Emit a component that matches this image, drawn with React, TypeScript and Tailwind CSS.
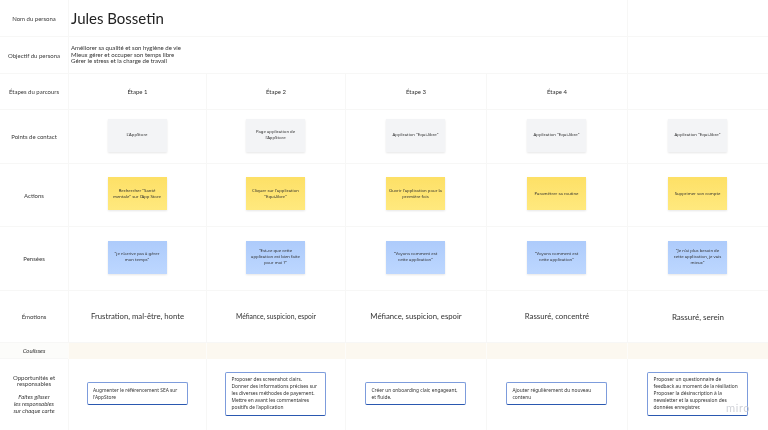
import React from 'react';

const line = 'border-b border-[#f7f7f6]';
const cell = 'border-l border-b border-[#f7f7f6]';

const contacts = ["L'AppStore", "Page application de\nl'AppStore", 'Application "Equi-libre"', 'Application "Equi-libre"', 'Application "Equi-libre"'];
const actions = ['Rechercher "Santé\nmentale" sur l\'App Store', 'Cliquer sur l\'application\n"Equi-libre"', "Ouvrir l'application pour la\npremière fois", 'Paramétrer sa routine', 'Supprimer son compte'];
const thoughts = ['"je n\'arrive pas à gérer\nmon temps"', '"Est-ce que cette\napplication est bien faite\npour moi ?"', '"Voyons comment est\ncette application"', '"Voyons comment est\ncette application"', '"Je n\'ai plus besoin de\ncette application, je vais\nmieux"'];
const emotions = [
  { text: 'Frustration, mal-être, honte', size: 'text-[7.75px]' },
  { text: 'Méfiance, suspicion, espoir', size: 'text-[6.8px]' },
  { text: 'Méfiance, suspicion, espoir', size: 'text-[7.75px]' },
  { text: 'Rassuré, concentré', size: 'text-[7.8px]' },
  { text: 'Rassuré, serein', size: 'text-[8px]' },
];
const opportunities = [
  "Augmenter le référencement SEA sur\nl'AppStore",
  'Proposer des screenshot clairs.\nDonner des informations précises sur\nles diverses méthodes de payement.\nMettre en avant les commentaires\npositifs de l\'application',
  'Créer un onboarding clair, engageant,\net fluide.',
  'Ajouter régulièrement du nouveau\ncontenu',
  'Proposer un questionnaire de\nfeedback au moment de la résiliation\nProposer la désinscription à la\nnewsletter et la suppression des\ndonnées enregistrer.',
];

const RowLabel = ({ children }: { children: React.ReactNode }) => (
  <div className={`${line} flex items-center justify-center text-center text-[6px] leading-[7px] text-[#3a3a3a] font-['Lato',sans-serif]`}>
    {children}
  </div>
);

const Sticky = ({ text, color }: { text: string; color: string }) => (
  <div className={`${cell} flex items-center justify-center pb-[3px] pr-[1px]`}>
    <div className={`${color} w-[59px] h-[33px] flex items-center justify-center text-center whitespace-pre-line text-[4.25px] leading-[5.8px] text-[#2d2d2d] shadow-[0_1px_2px_rgba(0,0,0,0.1)] font-['Noto_Sans',sans-serif]`}>
      <span>{text}</span>
    </div>
  </div>
);

export default function App() {
  return (
    <div className="relative w-[768px] h-[430px] overflow-hidden bg-white blur-[0.35px]">
      <div className="grid grid-cols-[68px_138px_139px_141px_141px_141px] grid-rows-[37px_37px_36px_54px_63px_64px_52px_16px_71px] w-[768px] h-[430px]">
        {/* Persona */}
        <RowLabel>Nom du persona</RowLabel>
        <div className={`${cell} col-span-4 flex items-center pl-[2px] text-[15px] text-[#222] font-['Lato',sans-serif]`}>Jules Bossetin</div>
        <div className={cell} />

        <RowLabel>Objectif du persona</RowLabel>
        <div className={`${cell} col-span-4 flex flex-col justify-center pl-[2px] text-[6.05px] leading-[6.7px] text-[#333] font-['Lato',sans-serif]`}>
          <span>Améliorer sa qualité et son hygiène de vie</span>
          <span>Mieux gérer et occuper son temps libre</span>
          <span>Gérer le stress et la charge de travail</span>
        </div>
        <div className={cell} />

        {/* Etapes */}
        <RowLabel>Étapes du parcours</RowLabel>
        {['Étape 1', 'Étape 2', 'Étape 3', 'Étape 4', ''].map((step, i) => (
          <div key={i} className={`${cell} flex items-center justify-center text-[6px] text-[#333] font-['Lato',sans-serif]`}>{step}</div>
        ))}

        <RowLabel>Points de contact</RowLabel>
        {contacts.map((t, i) => <Sticky key={i} text={t} color="bg-[#f3f4f6]" />)}

        <RowLabel>Actions</RowLabel>
        {actions.map((t, i) => <Sticky key={i} text={t} color="bg-gradient-to-b from-[#fde066] to-[#ffe97e]" />)}

        <RowLabel>Pensées</RowLabel>
        {thoughts.map((t, i) => <Sticky key={i} text={t} color="bg-gradient-to-b from-[#adcbfb] to-[#bdd7ff]" />)}

        <RowLabel>Émotions</RowLabel>
        {emotions.map((e, i) => (
          <div key={i} className={`${cell} ${e.size} flex items-center justify-center text-[#333] font-['Lato',sans-serif]`}>{e.text}</div>
        ))}

        {/* Coulisses */}
        <div className={`${line} flex items-center justify-center text-[6px] italic text-[#333] bg-[#fcfcfa] font-['Lato',sans-serif]`}>Coulisses</div>
        {[0, 1, 2, 3, 4].map(i => <div key={i} className="bg-[#fcf8f0] border-l border-[#fdfcf9]" />)}

        {/* Opportunites */}
        <div className="flex flex-col items-center justify-center text-center text-[6px] leading-[6.7px] text-[#3a3a3a] font-['Lato',sans-serif]">
          <span>Opportunités et</span>
          <span>responsables</span>
          <span className="italic mt-[6px]">Faites glisser</span>
          <span className="italic">les responsables</span>
          <span className="italic">sur chaque carte</span>
        </div>
        {opportunities.map((t, i) => (
          <div key={i} className="border-l border-[#f7f7f6] flex items-center justify-center pb-[2px] pr-[1px]">
            <div className="w-[101px] rounded-[2px] border-[0.7px] border-b-[1.5px] border-[#7d9cdc] border-b-[#2a58b0] bg-white px-[5.5px] py-[3.5px] whitespace-pre-line text-[4.85px] leading-[7px] text-[#333] font-['Noto_Sans',sans-serif]">
              {t}
            </div>
          </div>
        ))}
      </div>

      {/* miro watermark */}
      <span className="absolute left-[726px] top-[401px] text-[10.5px] tracking-[0.6px] text-[#c3c6cd]/80 font-['Inter',sans-serif]">miro</span>
    </div>
  );
}
